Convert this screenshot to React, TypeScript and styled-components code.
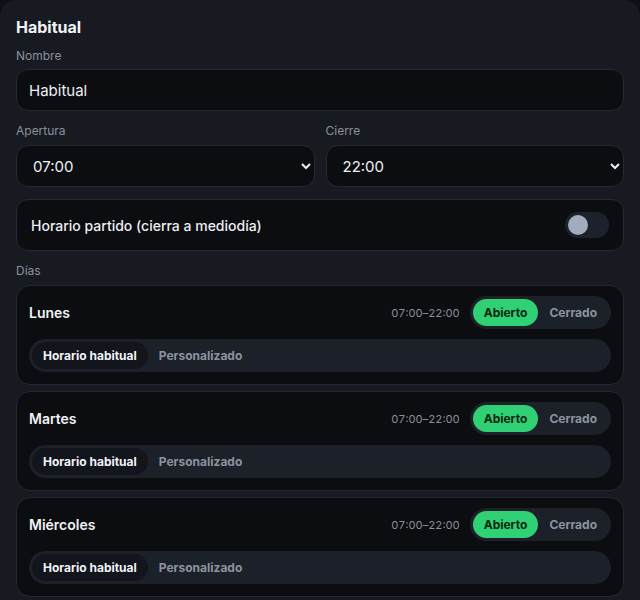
import React, { useState } from "react";
import styled, { createGlobalStyle } from "styled-components";

const Global = createGlobalStyle`
  html, body {
    margin: 0;
    padding: 0;
    background: #0e1015;
    color-scheme: dark;
  }
  body {
    font-family: Inter, "Noto Sans", "Liberation Sans", sans-serif;
    -webkit-font-smoothing: antialiased;
  }
  * { box-sizing: border-box; }
`;

const Panel = styled.section`
  background: #171a21;
  border-radius: 16px 16px 0 0;
  padding: 16px 16px 4px;
  min-height: 600px;
  display: flex;
  flex-direction: column;

  & > * {
    flex-shrink: 0;
  }
`;

const Title = styled.h2`
  margin: 0 0 10px;
  font-size: 16px;
  line-height: 22px;
  font-weight: 700;
  color: #f1f3f6;
`;

const Field = styled.label<{ $mb?: number; $gap?: number }>`
  display: flex;
  flex-direction: column;
  gap: ${(p) => p.$gap ?? 5}px;
  margin-bottom: ${(p) => p.$mb ?? 12}px;
  min-width: 0;
`;

const FieldLabel = styled.span`
  font-size: 12px;
  line-height: 16px;
  color: #8a909b;
`;

const TextInput = styled.input`
  height: 42px;
  width: 100%;
  padding: 0 12px;
  background: #0b0d11;
  border: 1px solid #252933;
  border-radius: 12px;
  color: #eef0f3;
  font: inherit;
  font-size: 15px;
  outline: none;
`;

const TwoCols = styled.div`
  display: grid;
  grid-template-columns: 1fr 1fr;
  gap: 11px;
  margin-bottom: 12px;
`;

const Select = styled.select`
  height: 42px;
  width: 100%;
  padding: 0 12px;
  background: #0b0d11;
  border: 1px solid #252933;
  border-radius: 12px;
  color: #eef0f3;
  font: inherit;
  font-size: 15px;
  outline: none;
  color-scheme: dark;
`;

const ToggleRow = styled.div`
  height: 52px;
  display: flex;
  align-items: center;
  justify-content: space-between;
  padding: 0 14px;
  background: #0b0d11;
  border: 1px solid #252933;
  border-radius: 12px;
  margin-bottom: 12px;
`;

const ToggleText = styled.span`
  font-size: 14px;
  font-weight: 500;
  color: #eceef2;
`;

const Switch = styled.button<{ $on: boolean }>`
  width: 44px;
  height: 26px;
  border: none;
  border-radius: 999px;
  padding: 3px;
  background: ${(p) => (p.$on ? "#30d074" : "#1d212b")};
  display: flex;
  justify-content: ${(p) => (p.$on ? "flex-end" : "flex-start")};
  align-items: center;
  cursor: pointer;
`;

const Knob = styled.span`
  width: 20px;
  height: 20px;
  border-radius: 50%;
  background: #a3acbc;
`;

const SectionLabel = styled(FieldLabel)`
  margin-bottom: 6px;
`;

const DayList = styled.div`
  display: flex;
  flex-direction: column;
  gap: 6px;
`;

const DayCard = styled.div`
  background: #0b0d11;
  border: 1px solid #242832;
  border-radius: 14px;
  padding: 10px 12px 12px;
  display: flex;
  flex-direction: column;
  gap: 10px;
`;

const DayHead = styled.div`
  display: flex;
  align-items: center;
  justify-content: space-between;
  height: 33px;
`;

const DayName = styled.span`
  font-size: 14px;
  font-weight: 600;
  color: #f1f3f6;
`;

const DayMeta = styled.div`
  display: flex;
  align-items: center;
  gap: 10px;
`;

const Hours = styled.span`
  font-size: 11px;
  color: #8a909b;
  font-variant-numeric: tabular-nums;
`;

const Track = styled.div<{ $full?: boolean }>`
  display: flex;
  align-items: center;
  height: 33px;
  padding: 3px;
  border-radius: 999px;
  background: #1c2029;
  ${(p) => (p.$full ? "width: 100%;" : "")}
`;

const Option = styled.button<{ $active: boolean; $tone: "green" | "dark" }>`
  height: 27px;
  border: none;
  border-radius: 999px;
  padding: 0 11px;
  font: inherit;
  font-size: 12px;
  font-weight: 700;
  cursor: pointer;
  background: ${(p) =>
    !p.$active ? "transparent" : p.$tone === "green" ? "#30d074" : "#12151c"};
  color: ${(p) =>
    !p.$active ? "#8d939e" : p.$tone === "green" ? "#062812" : "#f1f3f6"};
`;

type Day = { name: string; open: boolean; custom: boolean };

const initialDays: Day[] = [
  { name: "Lunes", open: true, custom: false },
  { name: "Martes", open: true, custom: false },
  { name: "Miércoles", open: true, custom: false },
];

const hours = Array.from({ length: 24 }, (_, h) => `${String(h).padStart(2, "0")}:00`);

export default function App() {
  const [name, setName] = useState("Habitual");
  const [opening, setOpening] = useState("07:00");
  const [closing, setClosing] = useState("22:00");
  const [split, setSplit] = useState(false);
  const [days, setDays] = useState(initialDays);

  const update = (i: number, patch: Partial<Day>) =>
    setDays((d) => d.map((x, j) => (j === i ? { ...x, ...patch } : x)));

  return (
    <>
      <Global />
      <Panel>
        <Title>Habitual</Title>
        <Field>
          <FieldLabel>Nombre</FieldLabel>
          <TextInput value={name} onChange={(e) => setName(e.target.value)} />
        </Field>
        <TwoCols>
          <Field $mb={0} $gap={6}>
            <FieldLabel>Apertura</FieldLabel>
            <Select value={opening} onChange={(e) => setOpening(e.target.value)}>
              {hours.map((h) => (
                <option key={h}>{h}</option>
              ))}
            </Select>
          </Field>
          <Field $mb={0} $gap={6}>
            <FieldLabel>Cierre</FieldLabel>
            <Select value={closing} onChange={(e) => setClosing(e.target.value)}>
              {hours.map((h) => (
                <option key={h}>{h}</option>
              ))}
            </Select>
          </Field>
        </TwoCols>
        <ToggleRow>
          <ToggleText>Horario partido (cierra a mediodía)</ToggleText>
          <Switch $on={split} onClick={() => setSplit(!split)} aria-pressed={split}>
            <Knob />
          </Switch>
        </ToggleRow>
        <SectionLabel>Días</SectionLabel>
        <DayList>
          {days.map((d, i) => (
            <DayCard key={d.name}>
              <DayHead>
                <DayName>{d.name}</DayName>
                <DayMeta>
                  <Hours>
                    {opening}–{closing}
                  </Hours>
                  <Track>
                    <Option $tone="green" $active={d.open} onClick={() => update(i, { open: true })}>
                      Abierto
                    </Option>
                    <Option $tone="green" $active={!d.open} onClick={() => update(i, { open: false })}>
                      Cerrado
                    </Option>
                  </Track>
                </DayMeta>
              </DayHead>
              <Track $full>
                <Option $tone="dark" $active={!d.custom} onClick={() => update(i, { custom: false })}>
                  Horario habitual
                </Option>
                <Option $tone="dark" $active={d.custom} onClick={() => update(i, { custom: true })}>
                  Personalizado
                </Option>
              </Track>
            </DayCard>
          ))}
        </DayList>
      </Panel>
    </>
  );
}
